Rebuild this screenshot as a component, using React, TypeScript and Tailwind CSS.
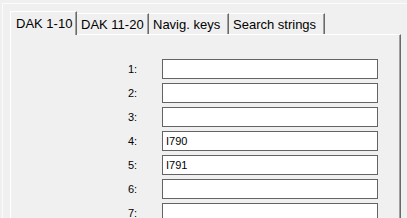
const tabs = ["DAK 1-10", "DAK 11-20", "Navig. keys", "Search strings"];
const tabWidths = ["w-[67px]", "w-[72px]", "w-[80px]", "w-[96px]"];

const rows: { label: string; value: string }[] = [
  { label: "1:", value: "" },
  { label: "2:", value: "" },
  { label: "3:", value: "" },
  { label: "4:", value: "I790" },
  { label: "5:", value: "I791" },
  { label: "6:", value: "" },
  { label: "7:", value: "" },
];

export default function App() {
  return (
    <div className="w-[407px] h-[218px] overflow-hidden bg-[#f0f0f0] pl-[2px] pt-[3px] font-['Liberation_Sans',Arial,sans-serif] text-black">
      <div className="border-l border-t border-[#fbfbfb] pl-[7px] pt-[7px]">
        {/* tab strip */}
        <div className="flex items-start">
          {tabs.map((tab, i) =>
            i === 0 ? (
              <div
                key={tab}
                className={`relative z-10 h-[24px] ${tabWidths[i]} border-l border-t border-white border-r border-r-[#696969] bg-[#f0f0f0] pl-[5px] pt-[4px] text-[13px] leading-[16px] shadow-[inset_-1px_0_0_#a0a0a0]`}
              >
                {tab}
              </div>
            ) : (
              <div
                key={tab}
                className={`mt-[2px] h-[21px] ${tabWidths[i]} border-t border-white border-r border-r-[#696969] pl-[4px] pt-[3px] text-[13px] leading-[16px] whitespace-nowrap shadow-[inset_-1px_0_0_#a0a0a0]`}
              >
                {tab}
              </div>
            )
          )}
        </div>

        {/* page */}
        <div className="-mt-px w-[391px] h-[200px] border-l border-t border-white border-r border-r-[#696969] bg-[#f0f0f0] pl-[117px] pt-[24px] shadow-[inset_-1px_0_0_#a0a0a0]">
          <div className="flex flex-col gap-[4px]">
            {rows.map((row) => (
              <div key={row.label} className="flex items-center">
                <span className="w-[34px] text-[11px] leading-[14px]">{row.label}</span>
                <input
                  readOnly
                  defaultValue={row.value}
                  className="h-[20px] w-[216px] border border-[#646464] bg-white pl-[3px] text-[11px] leading-[14px] outline-none"
                />
              </div>
            ))}
          </div>
        </div>
      </div>
    </div>
  );
}
